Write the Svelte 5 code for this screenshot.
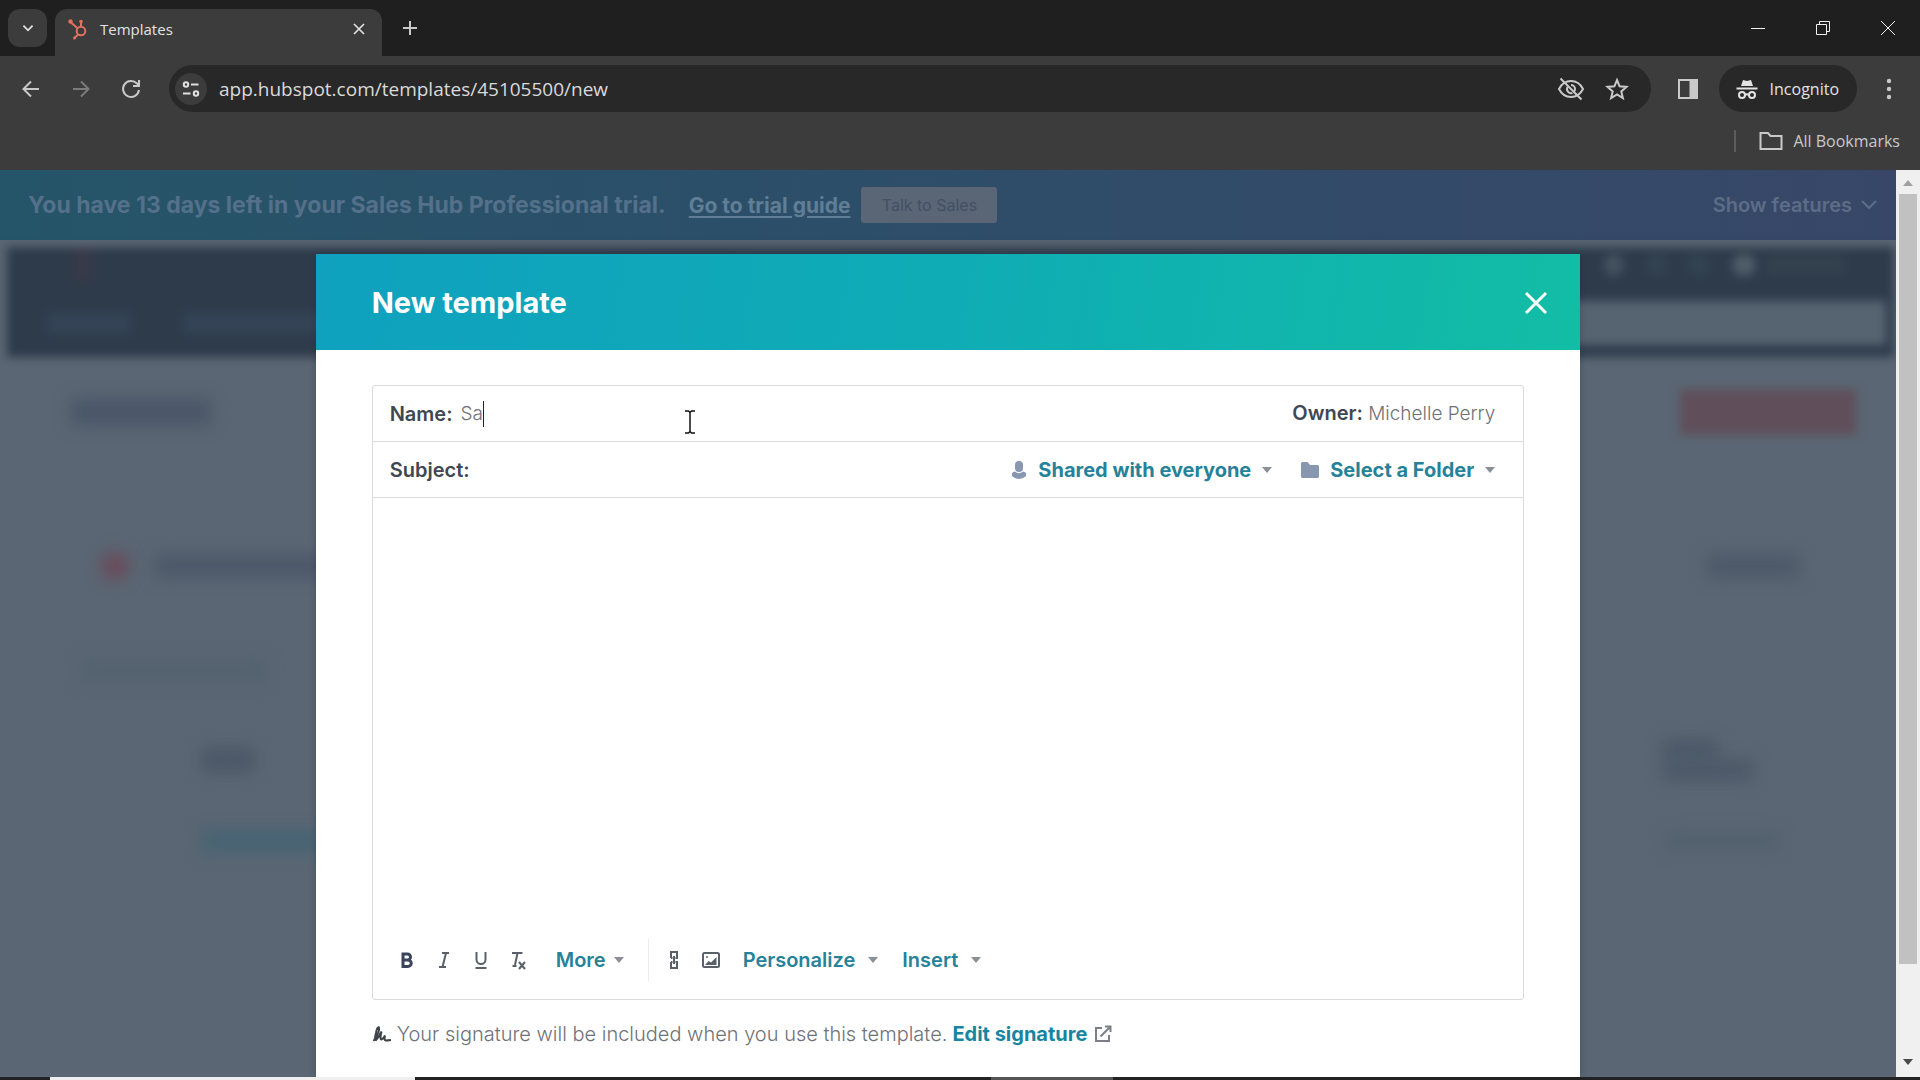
<script>
  let name = $state('Sa');
  let subject = $state('');
  let address = $state('app.hubspot.com/templates/45105500/new');
</script>

{#snippet caret()}
  <svg class="caret" viewBox="0 0 10 6" aria-hidden="true"><path d="M0 0h10L5 6z" /></svg>
{/snippet}

<div class="window">
  <header class="chrome">
    <div class="tabs">
      <button class="tab-search" aria-label="Search tabs">
        <svg viewBox="0 0 24 24" width="22" height="22"><path d="M7 9.5l5 5 5-5" /></svg>
      </button>
      <div class="tab">
        <svg class="logo" viewBox="0 0 20 22" width="20" height="22" aria-hidden="true">
          <circle cx="13" cy="13" r="4.3" />
          <path d="M13 9V4M9.500 10.200L2.500 4M10 16.500L6.500 20" />
          <circle class="dot" cx="13" cy="3.500" r="1.800" />
          <circle class="dot" cx="2.500" cy="3.500" r="2.200" />
          <circle class="dot" cx="6.500" cy="20" r="1.500" />
        </svg>
        <span class="tab-title">Templates</span>
        <button class="icon" aria-label="Close tab">
          <svg viewBox="0 0 24 24" width="20" height="20"><path d="M6 6l12 12M18 6L6 18" /></svg>
        </button>
      </div>
      <button class="icon new-tab" aria-label="New tab">
        <svg viewBox="0 0 24 24" width="24" height="24"><path d="M12 5v14M5 12h14" /></svg>
      </button>
      <div class="window-buttons">
        <button class="icon" aria-label="Minimize"><svg viewBox="0 0 16 16" width="16" height="16"><path d="M1 8.500h14" /></svg></button>
        <button class="icon" aria-label="Restore"><svg viewBox="0 0 16 16" width="16" height="16"><path d="M1.500 4.500h10v10h-10zM4.500 4.500v-3h10v10h-3" /></svg></button>
        <button class="icon" aria-label="Close window"><svg viewBox="0 0 16 16" width="16" height="16"><path d="M1 1l14 14M15 1L1 15" /></svg></button>
      </div>
    </div>

    <div class="toolbar">
      <button class="icon" aria-label="Back"><svg viewBox="0 0 24 24" width="24" height="24"><path d="M20 12H5M12 4.500L4.500 12l7.500 7.500" /></svg></button>
      <button class="icon faded" aria-label="Forward"><svg viewBox="0 0 24 24" width="24" height="24"><path d="M4 12h15M12 4.500l7.500 7.500-7.500 7.500" /></svg></button>
      <button class="icon" aria-label="Reload"><svg viewBox="0 0 24 24" width="24" height="24"><path d="M20 13a8 8 0 1 1-2-6.500L20 9M20 3v6h-6" /></svg></button>
      <div class="omnibox">
        <button class="site" aria-label="Site information">
          <svg viewBox="0 0 20 20" width="20" height="20"><circle cx="5" cy="5.500" r="2.200" /><path d="M10 5.500h7.500M2 14.500h7.500" /><circle cx="15" cy="14.500" r="2.200" /></svg>
        </button>
        <input aria-label="Address" bind:value={address} />
        <button class="icon" aria-label="Third-party cookies blocked">
          <svg viewBox="0 0 28 24" width="28" height="24"><path d="M2 12c2.500-5 7-8 12-8s9.500 3 12 8c-2.500 5-7 8-12 8s-9.500-3-12-8zM3.500 1.500l21 21" /><path d="M14 8a4 4 0 0 1 4 4c0 1-.3 1.800-.8 2.500M10.500 10a4.200 4.200 0 0 0 5 6" /></svg>
        </button>
        <button class="icon" aria-label="Bookmark this tab">
          <svg viewBox="0 0 24 24" width="24" height="24"><path d="M12 3l2.600 6.300 6.900.6-5.200 4.500 1.600 6.700L12 17.500l-5.900 3.600 1.600-6.700-5.200-4.500 6.900-.6z" /></svg>
        </button>
      </div>
      <div class="actions">
        <button class="icon" aria-label="Side panel">
          <svg viewBox="0 0 22 22" width="22" height="22"><path d="M2 2h18v18H2z" /><path class="fill" d="M12.500 2H20v18h-7.500z" /></svg>
        </button>
        <button class="incognito">
          <svg viewBox="0 0 22 22" width="22" height="22" aria-hidden="true"><path class="fill" d="M5 8l2-6 4 1 4-1 2 6z" /><path d="M0.500 10.500h21M9 17q2-1.500 4 0" /><circle cx="6" cy="17" r="3" /><circle cx="16" cy="17" r="3" /></svg>
          Incognito
        </button>
        <button class="icon" aria-label="Menu">
          <svg class="solid" viewBox="0 0 24 24" width="24" height="24"><circle cx="12" cy="4" r="2.200" /><circle cx="12" cy="12" r="2.200" /><circle cx="12" cy="20" r="2.200" /></svg>
        </button>
      </div>
    </div>

    <div class="bookmarks">
      <button>
        <svg viewBox="0 0 24 20" width="24" height="20" aria-hidden="true"><path d="M1.500 2h7.500l2.500 3h11v13h-21z" /></svg>
        All Bookmarks
      </button>
    </div>
  </header>

  <div class="viewport">
    <main class="page">
      <section class="banner">
        <strong>You have 13 days left in your Sales Hub Professional trial.</strong>
        <a href="#guide">Go to trial guide</a>
        <button class="sales">Talk to Sales</button>
        <button class="features">
          Show features
          <svg viewBox="0 0 16 10" width="16" height="10" aria-hidden="true"><path d="M1 1l7 7 7-7" /></svg>
        </button>
      </section>

      <div class="backdrop" aria-hidden="true">
        <div class="nav">
          <div class="nav-row">
            <i class="brand"></i>
            <i class="round push"></i><i class="slim"></i><i class="slim"></i><i class="round lit"></i><i class="account"></i>
          </div>
          <div class="nav-row links"><i></i><i class="long"></i><i class="search"></i></div>
        </div>
        <div class="line title"><i></i><i class="create"></i></div>
        <div class="line notice"><i class="alert"></i><i class="message"></i><i class="action"></i></div>
        <div class="line filter"><i></i></div>
        <div class="line head"><i></i><div class="stack"><i></i><i class="wide"></i></div></div>
        <div class="line record"><i></i><i class="date"></i></div>
      </div>

      <div class="layer">
        <div class="modal" role="dialog" aria-labelledby="dialog-title">
          <header>
            <h1 id="dialog-title">New template</h1>
            <button aria-label="Close">
              <svg viewBox="0 0 24 24" width="24" height="24"><path d="M2 2l20 20M22 2L2 22" /></svg>
            </button>
          </header>
          <div class="content">
            <form class="editor" onsubmit={(e) => e.preventDefault()}>
              <div class="row">
                <label for="name">Name:</label>
                <input id="name" class="name" autocomplete="off" bind:value={name} />
                <span class="text-cursor"></span>
                <span class="owner"><b>Owner:</b> Michelle Perry</span>
              </div>
              <div class="row">
                <label for="subject">Subject:</label>
                <input id="subject" class="subject" bind:value={subject} />
                <div class="choice">
                  <svg class="glyph" viewBox="0 0 16 18" width="16" height="18" aria-hidden="true"><rect x="4" y="0" width="8" height="11" rx="4" /><path d="M1 12q1.500-1.500 3-1.500Q8 14 12 10.500 13.500 10.500 15 12v3q-3 3-7 3t-7-3z" /></svg>
                  <select aria-label="Sharing"><option>Shared with everyone</option></select>
                  {@render caret()}
                </div>
                <div class="choice">
                  <svg class="glyph" viewBox="0 0 18 16" width="18" height="16" aria-hidden="true"><path d="M0 1.500Q0 0 1.500 0h5L9 3h7.500Q18 3 18 4.500v10q0 1.500-1.500 1.500h-15Q0 16 0 14.500z" /></svg>
                  <select aria-label="Folder"><option>Select a Folder</option></select>
                  {@render caret()}
                </div>
              </div>
              <textarea aria-label="Template body"></textarea>
              <div class="format">
                <div class="tools">
                  <button class="tool bold" aria-label="Bold">
                    <svg viewBox="0 0 16 20" width="16" height="20"><path d="M4 4h4.500a3 3 0 0 1 0 6H4zM4 10h5a3 3 0 0 1 0 6.500H4z" /></svg>
                  </button>
                  <button class="tool" aria-label="Italic">
                    <svg viewBox="0 0 16 20" width="16" height="20"><path d="M6 3h7M3 17h7M10 3L6.500 17" /></svg>
                  </button>
                  <button class="tool" aria-label="Underline">
                    <svg viewBox="0 0 16 20" width="16" height="20"><path d="M3.500 2v7.500a4.500 4.500 0 0 0 9 0V2M2.500 18h11" /></svg>
                  </button>
                  <button class="tool" aria-label="Clear formatting">
                    <svg viewBox="0 0 16 20" width="16" height="20"><path d="M2 3h10.500M7.500 3L5 15M2.500 16h4M9 12l6 7M15 12l-6 7" /></svg>
                  </button>
                </div>
                <button class="menu more">More {@render caret()}</button>
                <div class="tools inserts">
                  <button class="tool" aria-label="Insert link">
                    <svg viewBox="0 0 16 20" width="16" height="20"><path d="M5 8V2h6v6H9.500M5 8h1.500M5 12v6h6v-6H9.500M5 12h1.500M8 6v8" /></svg>
                  </button>
                  <button class="tool" aria-label="Insert image">
                    <svg viewBox="0 0 18 18" width="18" height="18"><rect x="1" y="2" width="16" height="14" rx="1.500" /><path class="fill" d="M3 14l3.500-4 2.500 1.500L14.500 6v8z" /><circle class="fill" cx="5" cy="6" r="1" /></svg>
                  </button>
                </div>
                <button class="menu">Personalize {@render caret()}</button>
                <button class="menu">Insert {@render caret()}</button>
              </div>
            </form>
            <p class="signature">
              <svg viewBox="0 0 20 18" width="20" height="18" aria-hidden="true"><path d="M1.500 16Q8 7 7 2.500 5 1.500 4 8 2 15.500 4 15 7.500 11 9.500 6.500 7.500 14.500 9.500 14.500q2-.5 3.500-4-1 5 .5 5 1.500 0 5.500-.5" /></svg>
              <span>Your signature will be included when you use this template.</span>
              <a href="#signature">Edit signature
                <svg viewBox="0 0 18 18" width="18" height="18" aria-hidden="true"><path d="M8 3H2v13h13v-6M6.500 11.500L16 2M11 1.500h5.500V7" /></svg>
              </a>
            </p>
          </div>
        </div>
      </div>
      <svg class="pointer" viewBox="0 0 10 24" width="10" height="24" aria-hidden="true"><path d="M0 1h3.500L5 2.500 6.500 1H10M5 2v20M0 23h3.500L5 21.500 6.500 23H10" /></svg>
    </main>
    <div class="scrollbar" aria-hidden="true">
      <svg class="up" viewBox="0 0 10 6" width="10" height="6"><path d="M0 6h10L5 0z" /></svg>
      <span class="thumb"></span>
      <svg viewBox="0 0 10 6" width="10" height="6"><path d="M0 0h10L5 6z" /></svg>
    </div>
  </div>
  <footer class="taskbar"><i class="find"></i><i class="apps"></i><i class="active"></i></footer>
</div>

<style>
  :global(body) { margin: 0; overflow: hidden; background: #1f1f1f; }
  * { box-sizing: border-box; }
  button, input, select, textarea { font: inherit; color: inherit; background: none; border: 0; padding: 0; margin: 0; outline: 0; }
  button { display: flex; align-items: center; justify-content: center; flex: none; }
  svg { display: block; flex: none; fill: none; stroke: currentColor; stroke-width: 2; }
  svg .fill { fill: currentColor; stroke: none; }
  i { display: block; flex: none; }

  .window { height: 100vh; display: flex; flex-direction: column; font-family: Inter, "Open Sans", sans-serif; }

  .chrome { flex: none; background: #3c3c3c; color: #c9c9c9; font: 16px/24px "Open Sans", "Noto Sans", sans-serif; }
  .tabs { height: 56px; display: flex; align-items: center; background: #1f1f1f; padding-left: 8px; }
  .tab-search { width: 39px; height: 38px; border-radius: 12px; background: #3c3c3c; color: #e0e0e0; }
  .tab { align-self: flex-end; height: 47px; width: 327px; margin-left: 8px; padding: 0 13px 8px; display: flex; align-items: center; gap: 12px; background: #3c3c3c; border-radius: 12px 12px 0 0; color: #e3e3e3; font-size: 15px; }
  .tab-title { flex: 1; }
  .logo { color: #e0705f; }
  .logo .dot { fill: currentColor; stroke: none; }
  .new-tab { margin-left: 16px; }
  .window-buttons { margin-left: auto; display: flex; gap: 49px; padding-right: 24px; color: #f0f0f0; }
  .window-buttons svg { stroke-width: 1; }

  .toolbar { height: 65px; padding: 0 19px; display: flex; align-items: center; gap: 26px; }
  .faded { color: #7b7b7b; }
  .omnibox { flex: 1; height: 47px; border-radius: 24px; background: #282828; display: flex; align-items: center; gap: 20px; padding: 0 22px 0 6px; }
  .omnibox input { flex: 1; margin-left: -8px; font-size: 19px; color: #dadada; }
  .site { width: 32px; height: 32px; border-radius: 50%; background: #3c3c3c; color: #e0e0e0; }
  .actions { display: flex; align-items: center; gap: 20px; }
  .incognito { height: 47px; border-radius: 24px; background: #282828; color: #e3e3e3; padding: 0 18px 0 17px; gap: 12px; }
  .solid { fill: currentColor; stroke: none; }
  .bookmarks { height: 49px; display: flex; justify-content: flex-end; padding: 9px 20px 0 0; }
  .bookmarks button { height: 22px; gap: 10px; padding-left: 23px; border-left: 2px solid #5c5c5c; }

  .viewport { flex: 1; min-height: 0; display: flex; }
  .page { flex: 1; min-width: 0; position: relative; overflow: hidden; background: #5a6673; display: flex; flex-direction: column; }
  .banner { height: 70px; flex: none; padding: 0 19px 0 28px; display: flex; align-items: center; gap: 11px; background: linear-gradient(90deg, #255569, #2d4e69 45%, #384767); color: #54708a; font-size: 20px; font-weight: 700; position: relative; }
  .banner strong { font-size: 23px; font-weight: 700; margin-right: 12px; }
  .banner a { font-size: 21px; color: #607e96; text-underline-offset: 3px; }
  .sales { height: 36px; width: 136px; border-radius: 3px; background: #5a6675; color: #425065; font-size: 16px; font-weight: 400; }
  .features { margin-left: auto; gap: 9px; color: #5b6d88; font-weight: 600; }

  .backdrop { padding: 7px 2px 7px 7px; display: flex; flex-direction: column; }
  .nav { height: 110px; background: #2d3b4b; filter: blur(5px); display: flex; flex-direction: column; }
  .nav-row { height: 53px; display: flex; align-items: center; gap: 24px; padding: 0 50px 18px 64px; }
  .nav-row i { background: #344352; height: 20px; }
  .nav-row .brand { width: 24px; height: 36px; background: #363a49; }
  .nav-row .push { margin-left: auto; }
  .nav-row .round { width: 20px; border-radius: 50%; background: #445260; height: 22px; }
  .nav-row .slim { width: 18px; }
  .nav-row .lit { width: 24px; background: #4f5c69; }
  .nav-row .account { width: 76px; margin-left: -12px; background: #33414f; }
  .links { padding: 0 8px 12px 40px; height: 57px; }
  .links i { width: 84px; height: 22px; background: #344355; }
  .links .long { width: 160px; margin-left: 28px; }
  .links .search { width: 420px; height: 44px; margin-left: auto; background: #566472; }
  .line { display: flex; align-items: center; justify-content: space-between; padding: 0 38px 0 64px; }
  .line i { filter: blur(8px); background: #4f5d6b; height: 24px; }
  .title { height: 110px; }
  .title i { width: 140px; height: 28px; background: #4a5768; }
  .title .create { width: 176px; height: 46px; background: #604f5b; border-radius: 4px; filter: blur(5px); }
  .notice { height: 198px; padding: 0 95px 0 94px; }
  .notice .alert { width: 28px; height: 28px; border-radius: 50%; background: #6b4a5a; }
  .notice .message { width: 200px; margin: 0 auto 0 26px; background: #4c596a; }
  .notice .action { width: 92px; background: #4d596a; }
  .filter { height: 12px; padding-left: 74px; }
  .filter i { width: 185px; background: #546270; }
  .head { height: 164px; padding: 2px 141px 0 194px; }
  .head i { width: 54px; background: #4b5868; }
  .head .stack { display: flex; flex-direction: column; }
  .head .stack i { height: 20px; }
  .head .stack .wide { width: 90px; }
  .record { height: 0; padding: 0 115px 0 194px; }
  .record i { width: 160px; background: #486473; }
  .record .date { width: 112px; height: 18px; background: #52606d; }

  .layer { position: absolute; inset: 84px 0 0; display: flex; justify-content: center; }
  .modal { width: 66.7%; background: #fff; display: flex; flex-direction: column; box-shadow: 0 1px 6px rgba(30, 40, 55, .3); }
  .modal > header { height: 96px; flex: none; padding: 2px 32px 0 56px; display: flex; align-items: center; justify-content: space-between; color: #fff; background: linear-gradient(100deg, #0fa1bf, #0facb5 50%, #12bda5); }
  .modal > header svg { stroke-width: 3; }
  h1 { margin: 0; font-size: 29px; font-weight: 700; line-height: 36px; }
  .content { flex: 1; min-height: 0; padding: 35px 56px 0; display: flex; flex-direction: column; color: #6f7278; font-size: 19px; line-height: 28px; font-weight: 300; }
  .editor { height: 615px; border: 1px solid #dadada; border-radius: 3px; display: flex; flex-direction: column; }
  .row { height: 56px; flex: none; display: flex; align-items: center; padding: 0 28px 0 17px; border-bottom: 1px solid #dadada; }
  label, .owner b { color: #3f4752; font-size: 20px; font-weight: 600; }
  .name { field-sizing: content; margin-left: 8px; }
  .text-cursor { width: 1px; height: 26px; background: #222; }
  .owner { margin-left: auto; }
  .subject { flex: 1; min-width: 0; margin-left: 8px; }
  .choice { display: flex; align-items: center; gap: 11px; color: #258299; font-size: 20px; font-weight: 700; margin-left: 29px; }
  select { appearance: none; field-sizing: content; }
  .glyph { fill: #8797b0; stroke: none; }
  .caret { width: 10px; height: 6px; fill: #8b8f96; stroke: none; }
  textarea { flex: 1; resize: none; }
  .format { height: 76px; flex: none; display: flex; align-items: center; padding: 0 26px 2px; gap: 24px; color: #258299; font-size: 20px; font-weight: 600; }
  .tools { display: flex; align-items: center; gap: 21px; }
  .inserts { height: 44px; padding-left: 17px; border-left: 1px solid #ececec; }
  .tool { width: 16px; color: #5a6069; }
  .tool.bold { color: #39455e; }
  .tool svg { stroke-width: 2; }
  .tool.bold svg { stroke-width: 3; }
  .menu { gap: 13px; }
  .more { margin-left: 6px; gap: 8px; }
  .signature { margin: 20px 0 0; display: flex; align-items: center; gap: 5px; font-size: 20px; }
  .signature svg { stroke-width: 2; color: #3f444b; }
  .signature a { display: flex; align-items: center; gap: 7px; color: #1785a0; font-weight: 700; text-decoration: none; }
  .signature a svg { color: #7b8088; }
  .pointer { position: absolute; left: 685px; top: 240px; stroke: #111; stroke-width: 1.5; }

  .scrollbar { width: 24px; background: #f0f0f0; display: flex; flex-direction: column; align-items: center; justify-content: space-between; padding: 10px 0 12px; }
  .scrollbar svg { fill: #4a4a4a; stroke: none; }
  .scrollbar .up { fill: #a0a0a0; }
  .scrollbar .thumb { width: 18px; height: 87%; margin: 8px 0 auto; background: #c1c1c1; }
  .taskbar { height: 3px; flex: none; display: flex; background: #222; }
  .find { width: 19%; margin-left: 50px; background: #efefef; }
  .apps { width: 30%; }
  .active { width: 122px; background: #555; }
</style>
